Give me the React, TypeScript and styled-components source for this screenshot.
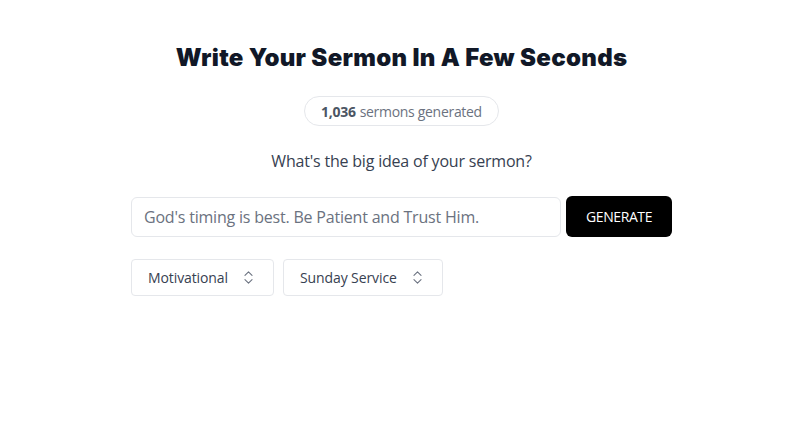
import React, { useState } from 'react'
import styled, { createGlobalStyle } from 'styled-components'
import { ChevronsUpDown } from 'lucide-react'

const GlobalStyle = createGlobalStyle`
  html, body {
    margin: 0;
    padding: 0;
    background: #ffffff;
  }
  body {
    font-family: "Open Sans", "Noto Sans", sans-serif;
  }
`

const Page = styled.main`
  display: flex;
  flex-direction: column;
  align-items: center;
  padding: 42px 0 0 3px;
  min-height: 427px;
  box-sizing: border-box;
`

const Title = styled.h1`
  margin: 0;
  font-family: "Inter", "Lato", sans-serif;
  font-weight: 900;
  font-size: 24px;
  line-height: 32px;
  color: #111827;
  letter-spacing: 0.3px;
`

const Counter = styled.p`
  margin: 22px 0 0;
  padding: 0 16px;
  height: 30px;
  box-sizing: border-box;
  display: flex;
  align-items: center;
  border: 1px solid #e5e7eb;
  border-radius: 999px;
  font-size: 14px;
  color: #6b7280;
  letter-spacing: -0.3px;

  b {
    font-weight: 700;
    color: #4b5563;
    margin-right: 4px;
  }
`

const Question = styled.p`
  margin: 23px 0 0;
  font-size: 16px;
  line-height: 24px;
  color: #374151;
  letter-spacing: -0.2px;
`

const Form = styled.div`
  margin-top: 23px;
  width: 541px;
  display: flex;
  flex-direction: column;
  gap: 22px;
`

const Row = styled.div<{ gap: number }>`
  display: flex;
  align-items: center;
  gap: ${(p) => p.gap}px;
`

const Input = styled.input`
  flex: 1;
  height: 40px;
  box-sizing: border-box;
  padding: 0 12px;
  border: 1px solid #e5e7eb;
  border-radius: 6px;
  font-family: inherit;
  font-size: 16px;
  color: #111827;
  letter-spacing: -0.2px;
  outline: none;

  &::placeholder {
    color: #6b7280;
  }
`

const Button = styled.button`
  width: 106px;
  height: 41px;
  border: none;
  border-radius: 6px;
  background: #000000;
  color: #ffffff;
  font-family: inherit;
  font-size: 14px;
  letter-spacing: -0.4px;
  cursor: pointer;
`

const Select = styled.button`
  height: 37px;
  box-sizing: border-box;
  display: flex;
  align-items: center;
  gap: 12px;
  padding: 0 16px 0 16px;
  border: 1px solid #e5e7eb;
  border-radius: 4px;
  background: #ffffff;
  font-family: inherit;
  font-size: 14px;
  color: #374151;
  letter-spacing: -0.1px;
  cursor: pointer;

  svg {
    color: #6b7280;
  }
`

const App: React.FC = () => {
  const [idea, setIdea] = useState('')

  return (
    <>
      <GlobalStyle />
      <Page>
        <Title>Write Your Sermon In A Few Seconds</Title>
        <Counter>
          <b>1,036</b> sermons generated
        </Counter>
        <Question>What's the big idea of your sermon?</Question>
        <Form>
          <Row gap={5}>
            <Input
              value={idea}
              onChange={(e) => setIdea(e.target.value)}
              placeholder="God's timing is best. Be Patient and Trust Him."
            />
            <Button>GENERATE</Button>
          </Row>
          <Row gap={9}>
            <Select>
              Motivational
              <ChevronsUpDown size={17} strokeWidth={1.5} />
            </Select>
            <Select>
              Sunday Service
              <ChevronsUpDown size={17} strokeWidth={1.5} />
            </Select>
          </Row>
        </Form>
      </Page>
    </>
  )
}

export default App
